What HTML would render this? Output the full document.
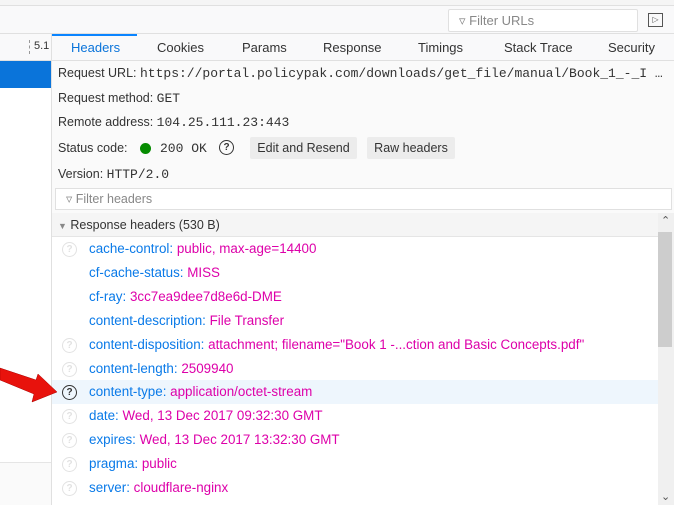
<!DOCTYPE html><html><head><style>
html,body{margin:0;width:674px;height:505px;overflow:hidden}
body{background:#fff;font-family:"Liberation Sans",sans-serif;font-size:12.5px;color:#333;position:relative}
.a{position:absolute;white-space:nowrap}
.mono{font-family:"Liberation Mono",monospace;font-size:13px}
.r{font-size:13.4px}
.k{color:#0a7ae8}.v{color:#dd00a9}
.q{position:absolute;left:62px;width:13px;height:13px;border:1.3px solid #e2e2e2;border-radius:50%;color:#e2e2e2;font-size:10px;text-align:center;line-height:13px;font-weight:bold}
.q.d{border-color:#333;color:#333}
</style></head><body>
<div class="a" style="left:0;top:0;width:674px;height:5px;background:#f5f5f5;border-bottom:1px solid #e0e0e0"></div>
<div class="a" style="left:0;top:6px;width:674px;height:27px;background:#f9f9fa;border-bottom:1px solid #e0e0e0"></div>
<div class="a" style="left:448px;top:9px;width:188px;height:21px;background:#fff;border:1px solid #e0e0e0;border-radius:2px;color:#888;font-size:13px;line-height:21px;text-indent:10px">▿ Filter URLs</div>
<div class="a" style="left:648px;top:13px;width:13px;height:12px;border:1px solid #555;font-size:8px;line-height:12px;color:#555;text-align:center">▷</div>
<div class="a" style="left:0;top:34px;width:51px;height:26px;background:#f9f9fa;border-bottom:1px solid #e0e0e0"></div>
<div class="a" style="left:29px;top:40px;border-left:1px dashed #999;height:14px"></div>
<div class="a" style="left:34px;top:40px;font-size:11px">5.1</div>
<div class="a" style="left:0;top:61px;width:51px;height:27px;background:#0a74da"></div>
<div class="a" style="left:0;top:462px;width:51px;height:1px;background:#e5e5e5"></div>
<div class="a" style="left:0;top:463px;width:51px;height:42px;background:#fafafa"></div>
<div class="a" style="left:51px;top:34px;width:1px;height:471px;background:#e0e0e0"></div>
<div class="a" style="left:52px;top:34px;width:622px;height:26px;background:#f9f9fa;border-bottom:1px solid #e0e0e0"></div>
<div class="a" style="left:52px;top:34px;width:85px;height:2px;background:#0a84ff"></div>
<div class="a" style="left:71px;top:40px;color:#0a74da;font-size:13px">Headers</div>
<div class="a" style="left:157px;top:40px;font-size:13px">Cookies</div>
<div class="a" style="left:242px;top:40px;font-size:13px">Params</div>
<div class="a" style="left:323px;top:40px;font-size:13px">Response</div>
<div class="a" style="left:418px;top:40px;font-size:13px">Timings</div>
<div class="a" style="left:504px;top:40px;font-size:13px">Stack Trace</div>
<div class="a" style="left:608px;top:40px;font-size:13px">Security</div>
<div class="a" style="left:52px;top:61px;width:622px;height:152px;background:#fafafa"></div>
<div class="a" style="left:58px;top:66px">Request URL: <span class="mono">https://portal.policypak.com/downloads/get_file/manual/Book_1_-_I …</span></div>
<div class="a" style="left:58px;top:91px">Request method: <span class="mono">GET</span></div>
<div class="a" style="left:58px;top:115px">Remote address: <span class="mono">104.25.111.23:443</span></div>
<div class="a" style="left:58px;top:141px">Status code:</div>
<div class="a" style="left:140px;top:143px;width:11px;height:11px;border-radius:50%;background:#058b00"></div>
<div class="a mono" style="left:160px;top:141px">200 OK</div>
<div class="a" style="left:219px;top:140px;width:13px;height:13px;border:1.4px solid #333;border-radius:50%;font-size:10px;font-weight:bold;text-align:center;line-height:13px">?</div>
<div class="a" style="left:250px;top:137px;width:107px;height:22px;background:#ececec;border-radius:2px;text-align:center;line-height:22px">Edit and Resend</div>
<div class="a" style="left:367px;top:137px;width:88px;height:22px;background:#ececec;border-radius:2px;text-align:center;line-height:22px">Raw headers</div>
<div class="a" style="left:58px;top:167px">Version: <span class="mono">HTTP/2.0</span></div>
<div class="a" style="left:55px;top:188px;width:615px;height:20px;background:#fff;border:1px solid #e0e0e0;color:#888;line-height:20px;text-indent:10px">▿ Filter headers</div>
<div class="a" style="left:52px;top:213px;width:606px;height:23px;background:#f5f5f5;border-bottom:1px solid #e5e5e5"></div>
<div class="a" style="left:58px;top:218px"><span style="color:#888;font-size:9px">▼</span> Response headers (530 B)</div>
<div class="a" style="left:658px;top:213px;width:16px;height:292px;background:#f0f0f0"></div>
<div class="a" style="left:658px;top:232px;width:14px;height:115px;background:#cdcdcd"></div>
<div class="a" style="left:661px;top:214px;font-size:11px;color:#555">⌃</div>
<div class="a" style="left:661px;top:490px;font-size:11px;color:#555">⌄</div>
<div class="a" style="left:52px;top:380px;width:606px;height:24px;background:#eef6fd"></div>

<div class="q" style="top:242px">?</div><div class="a r" style="left:89px;top:241px"><span class="k">cache-control:</span> <span class="v">public, max-age=14400</span></div>
<div class="a r" style="left:89px;top:265px"><span class="k">cf-cache-status:</span> <span class="v">MISS</span></div>
<div class="a r" style="left:89px;top:289px"><span class="k">cf-ray:</span> <span class="v">3cc7ea9dee7d8e6d-DME</span></div>
<div class="a r" style="left:89px;top:313px"><span class="k">content-description:</span> <span class="v">File Transfer</span></div>
<div class="q" style="top:338px">?</div><div class="a r" style="left:89px;top:337px"><span class="k">content-disposition:</span> <span class="v">attachment; filename="Book 1 -...ction and Basic Concepts.pdf"</span></div>
<div class="q" style="top:362px">?</div><div class="a r" style="left:89px;top:361px"><span class="k">content-length:</span> <span class="v">2509940</span></div>
<div class="q d" style="top:385px">?</div><div class="a r" style="left:89px;top:384px"><span class="k">content-type:</span> <span class="v">application/octet-stream</span></div>
<div class="q" style="top:409px">?</div><div class="a r" style="left:89px;top:408px"><span class="k">date:</span> <span class="v">Wed, 13 Dec 2017 09:32:30 GMT</span></div>
<div class="q" style="top:433px">?</div><div class="a r" style="left:89px;top:432px"><span class="k">expires:</span> <span class="v">Wed, 13 Dec 2017 13:32:30 GMT</span></div>
<div class="q" style="top:457px">?</div><div class="a r" style="left:89px;top:456px"><span class="k">pragma:</span> <span class="v">public</span></div>
<div class="q" style="top:481px">?</div><div class="a r" style="left:89px;top:480px"><span class="k">server:</span> <span class="v">cloudflare-nginx</span></div>
<svg class="a" style="left:0;top:360px" width="70" height="50"><polygon points="0,8 36,20 38,14 57,32 32,42 34,34 0,20" fill="#e8120c" stroke="#a00" stroke-width="0.5"/></svg>
</body></html>
